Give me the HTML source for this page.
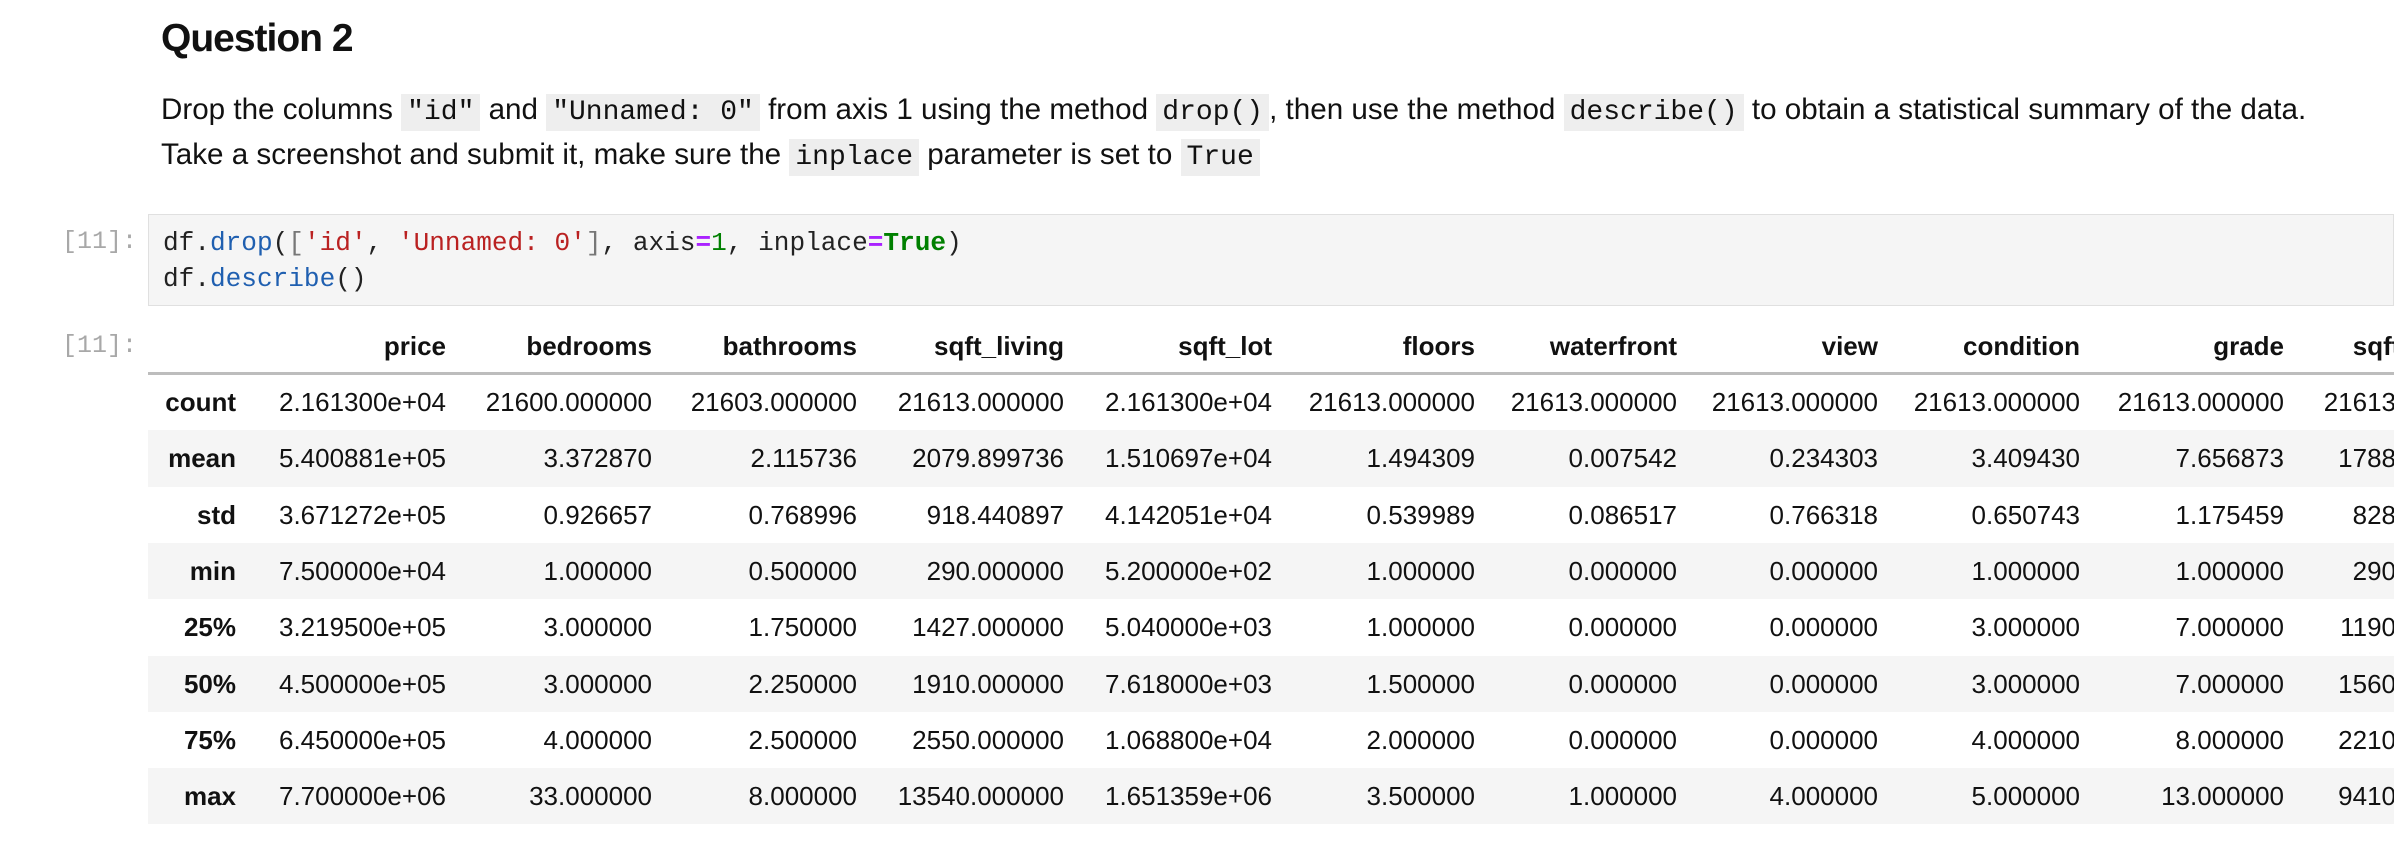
<!DOCTYPE html>
<html><head><meta charset="utf-8"><style>
html,body{margin:0;padding:0;width:2394px;height:852px;overflow:hidden;background:#fff;}
body{position:relative;font-family:"Liberation Sans",Helvetica,Arial,sans-serif;color:#222;}
.abs{position:absolute;white-space:nowrap;}
h1{position:absolute;left:161px;top:17px;margin:0;font-size:39px;font-weight:bold;color:#111;letter-spacing:-1px;}
.p{position:absolute;left:161px;font-size:29.6px;line-height:40px;color:#111;white-space:nowrap;}
.ic{font-family:"Liberation Mono",monospace;font-size:28px;background:#eee;padding:3px 6px;}
.prompt{position:absolute;left:62px;font-family:"Liberation Mono",monospace;font-size:25px;color:#a8a8a8;}
.code{position:absolute;left:148px;top:214px;width:2244px;height:90px;background:#f5f5f5;border:1px solid #e0e0e0;}
.cl{position:absolute;left:14px;font-family:"Liberation Mono",monospace;font-size:26.1px;color:#222;white-space:nowrap;}
.f{color:#1f5fb0}.s{color:#ba2121}.o{color:#aa22ff;font-weight:bold}.n{color:#008000}.k{color:#008000;font-weight:bold}.b{color:#777}
.stripe{position:absolute;left:148px;width:2246px;height:56.3px;background:#f5f5f5;}
.c{position:absolute;font-size:26px;text-align:right;white-space:nowrap;color:#111;}
.h{font-weight:bold;}
</style></head><body>
<h1>Question 2</h1>
<div class="p" style="top:90px">Drop the columns <span class="ic">"id"</span> and <span class="ic">"Unnamed: 0"</span> from axis 1 using the method <span class="ic">drop()</span>, then use the method <span class="ic">describe()</span> to obtain a statistical summary of the data.</div>
<div class="p" style="top:135px">Take a screenshot and submit it, make sure the <span class="ic">inplace</span> parameter is set to <span class="ic">True</span></div>

<div class="prompt" style="top:227px">[11]:</div>
<div class="code">
<div class="cl" style="top:13px">df.<span class="f">drop</span>(<span class="b">[</span><span class="s">'id'</span>, <span class="s">'Unnamed: 0'</span><span class="b">]</span>, axis<span class="o">=</span><span class="n">1</span>, inplace<span class="o">=</span><span class="k">True</span>)</div>
<div class="cl" style="top:49px">df.<span class="f">describe</span>()</div>
</div>

<div class="prompt" style="top:331px">[11]:</div>
<div class="abs" style="left:148px;top:372px;width:2246px;height:3px;background:#bdbdbd"></div>
<div class="stripe" style="top:430.3px"></div>
<div class="stripe" style="top:542.9px"></div>
<div class="stripe" style="top:655.5px"></div>
<div class="stripe" style="top:768.1px"></div>
<div id="t"></div>
<script>
(function(){
var rights=[236,446,652,857,1064,1272,1475,1677,1878,2080,2284,2490];
var hdr=["","price","bedrooms","bathrooms","sqft_living","sqft_lot","floors","waterfront","view","condition","grade","sqft_above"];
var rows=[
["count","2.161300e+04","21600.000000","21603.000000","21613.000000","2.161300e+04","21613.000000","21613.000000","21613.000000","21613.000000","21613.000000","21613.000000"],
["mean","5.400881e+05","3.372870","2.115736","2079.899736","1.510697e+04","1.494309","0.007542","0.234303","3.409430","7.656873","1788.390691"],
["std","3.671272e+05","0.926657","0.768996","918.440897","4.142051e+04","0.539989","0.086517","0.766318","0.650743","1.175459","828.090978"],
["min","7.500000e+04","1.000000","0.500000","290.000000","5.200000e+02","1.000000","0.000000","0.000000","1.000000","1.000000","290.000000"],
["25%","3.219500e+05","3.000000","1.750000","1427.000000","5.040000e+03","1.000000","0.000000","0.000000","3.000000","7.000000","1190.000000"],
["50%","4.500000e+05","3.000000","2.250000","1910.000000","7.618000e+03","1.500000","0.000000","0.000000","3.000000","7.000000","1560.000000"],
["75%","6.450000e+05","4.000000","2.500000","2550.000000","1.068800e+04","2.000000","0.000000","0.000000","4.000000","8.000000","2210.000000"],
["max","7.700000e+06","33.000000","8.000000","13540.000000","1.651359e+06","3.500000","1.000000","4.000000","5.000000","13.000000","9410.000000"]];
var h="";
function cell(txt,r,y,bold){return '<div class="c'+(bold?' h':'')+'" style="left:'+(r-300)+'px;width:300px;top:'+y+'px">'+txt+'</div>';}
for(var j=1;j<hdr.length;j++)h+=cell(hdr[j],rights[j],331,true);
for(var i=0;i<rows.length;i++){var yy=Math.round(374+56.3*i+13);for(var j=0;j<rows[i].length;j++)h+=cell(rows[i][j],rights[j],yy,j==0);}
document.getElementById("t").innerHTML=h;
})();
</script>
</body></html>
